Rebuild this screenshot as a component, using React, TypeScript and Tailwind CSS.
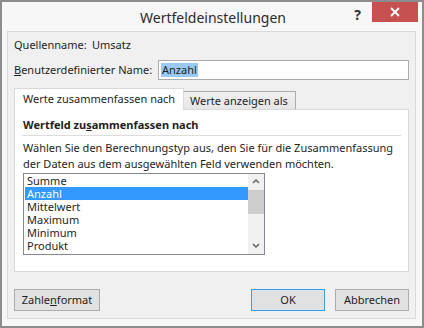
import React from 'react';

const font = { fontFamily: '"Noto Sans", "Open Sans", sans-serif' };

const items = ['Summe', 'Anzahl', 'Mittelwert', 'Maximum', 'Minimum', 'Produkt'];

export default function App() {
  return (
    <div
      className="w-[424px] h-[328px] border-2 border-[#8c8c8c] bg-[#f7f7f7] flex flex-col text-[11px] text-[#1e1e1e] whitespace-nowrap"
      style={font}
    >
      {/* title bar */}
      <div className="h-[29px] flex items-start relative">
        <div className="flex-1 text-center text-[14px] text-[#2b2b2b] pt-[5px] pl-[2px]">Wertfeldeinstellungen</div>
        <div className="absolute right-[61px] top-[2px] text-[14px] font-bold text-[#333]">?</div>
        <div className="absolute right-[4px] top-0 w-[46px] h-[20px] bg-[#c75050] flex items-center justify-center text-white">
          <svg width="10" height="10" viewBox="0 0 10 10">
            <path d="M1 1 L9 9 M9 1 L1 9" stroke="white" strokeWidth="1.8" />
          </svg>
        </div>
      </div>

      {/* client */}
      <div className="ml-[5px] mr-[6px] mb-[7px] flex-1 bg-[#f0f0f0] border border-[#dadada] flex flex-col px-[6px]">
        <div className="flex h-[16px] mt-[5px] items-center">
          <span className="w-[78px]">Quellenname:</span>
          <span>Umsatz</span>
        </div>

        <div className="flex items-center mt-[7px] h-[20px]">
          <span className="w-[144px]">
            <span className="underline">B</span>enutzerdefinierter Name:
          </span>
          <div className="flex-1 h-[20px] bg-white border border-[#acacac] flex items-center px-[2px]">
            <span className="bg-[#99c9f5] px-px leading-[14px]">Anzahl</span>
          </div>
        </div>

        {/* tabs */}
        <div className="flex items-end mt-[8px] h-[22px]">
          <div className="h-[22px] w-[170px] bg-white border border-b-0 border-[#d9d9d9] flex items-center pl-[8px] relative z-10 pb-[1px]">
            Werte zusammenfassen nach
          </div>
          <div className="h-[19px] w-[113px] -ml-px bg-gradient-to-b from-[#f0f0f0] to-[#e5e5e5] border border-b-0 border-[#acacac] flex items-center pl-[6px]">
            Werte anzeigen als
          </div>
        </div>

        <div className="h-[163px] -mt-px bg-white border border-[#d9d9d9] flex flex-col px-[8px]">
          <div className="font-bold mt-[7px] h-[16px] leading-[16px]">
            Wertfeld zu<span className="underline">s</span>ammenfassen nach
          </div>
          <div className="h-px bg-[#dcdcdc] mt-[2px] mr-[-1px] ml-[-1px]" />
          <div className="mt-[4px] leading-[16px]">
            Wählen Sie den Berechnungstyp aus, den Sie für die Zusammenfassung
            <br />
            der Daten aus dem ausgewählten Feld verwenden möchten.
          </div>
          <div className="mt-[1px] w-[242px] h-[82px] border border-[#828790] flex">
            <div className="flex-1 pl-px">
              {items.map((it) => (
                <div
                  key={it}
                  className={`h-[13px] leading-[13px] pl-[2px] overflow-hidden ${it === 'Anzahl' ? 'bg-[#3399ff] text-white' : ''}`}
                >
                  {it}
                </div>
              ))}
            </div>
            <div className="w-[16px] bg-[#f0f0f0] flex flex-col items-center">
              <svg className="mt-[4px]" width="8" height="6" viewBox="0 0 8 6">
                <path d="M1 5 L4 2 L7 5" stroke="#606060" strokeWidth="1.5" fill="none" />
              </svg>
              <div className="w-[16px] h-[24px] bg-[#cdcdcd] mt-[6px]" />
              <div className="flex-1" />
              <svg className="mb-[5px]" width="8" height="6" viewBox="0 0 8 6">
                <path d="M1 1 L4 4 L7 1" stroke="#606060" strokeWidth="1.5" fill="none" />
              </svg>
            </div>
          </div>
        </div>

        {/* buttons */}
        <div className="flex mt-[17px] h-[22px] items-center">
          <button className="w-[86px] h-[22px] bg-[#e1e1e1] border border-[#adadad]">
            Zahle<span className="underline">n</span>format
          </button>
          <div className="flex-1" />
          <button className="w-[74px] h-[22px] bg-[#e1e1e1] border border-[#3c9cf0]">OK</button>
          <button className="w-[74px] h-[22px] bg-[#e1e1e1] border border-[#adadad] ml-[10px]">Abbrechen</button>
        </div>
      </div>
    </div>
  );
}
